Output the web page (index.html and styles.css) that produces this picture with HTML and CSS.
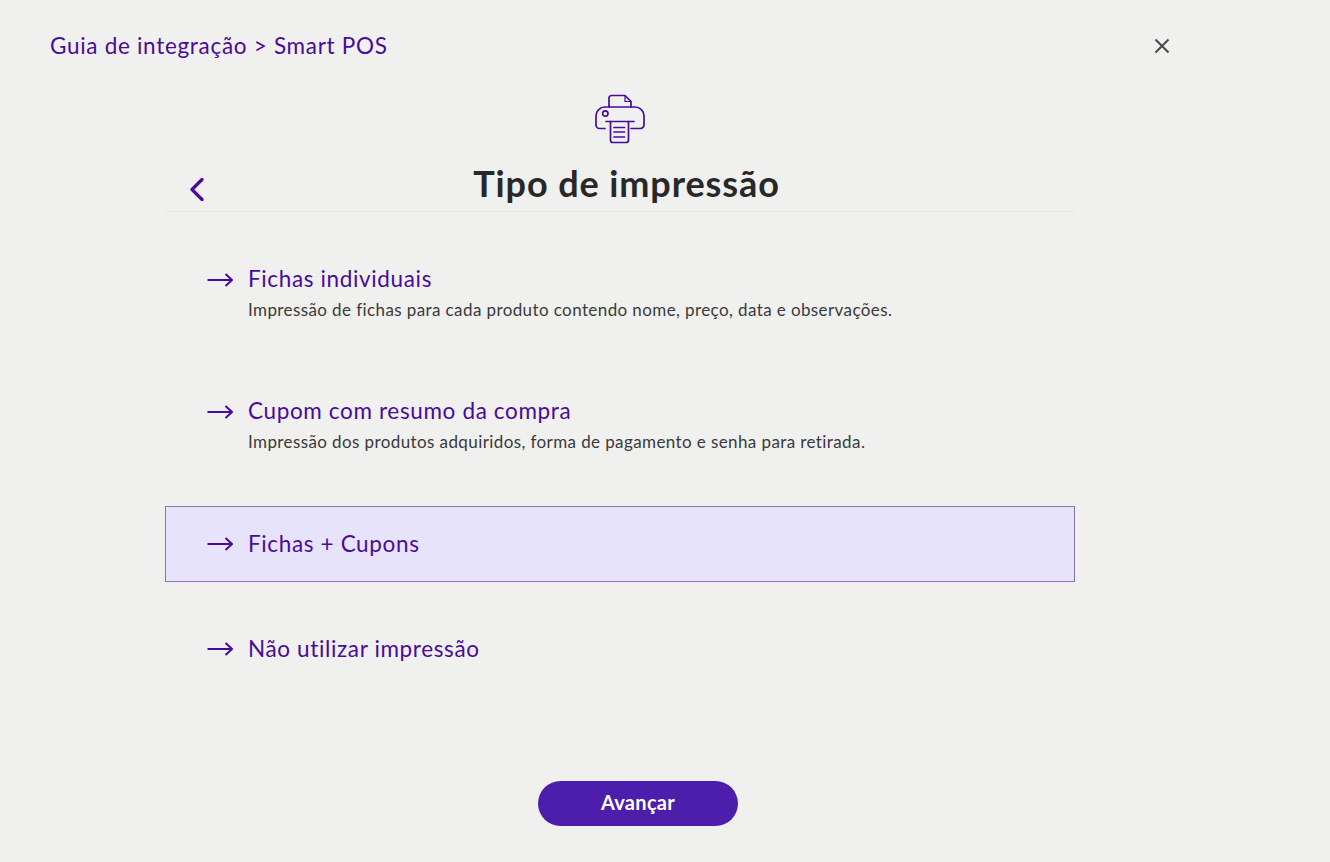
FILE: index.html
```html
<!DOCTYPE html>
<html lang="pt-BR">
<head>
<meta charset="utf-8">
<title>Tipo de impressão</title>
<link rel="stylesheet" href="styles.css">
</head>
<body>
<div class="page">
  <header class="top">
    <h2 class="crumb">Guia de integração &gt; Smart POS</h2>
    <button class="close" aria-label="Fechar">
      <svg width="16" height="16" viewBox="0 0 16 16"><path d="M1.500 1.500l13 13M14.500 1.500l-13 13" fill="none" stroke="#4a4a4a" stroke-width="2"/></svg>
    </button>
  </header>
  <main class="panel">
    <div class="hero">
      <svg class="printer" width="50" height="50" viewBox="0 0 50 50" fill="none" stroke="#4a0a9a" stroke-width="1.700" stroke-linecap="round" stroke-linejoin="round">
        <path d="M14 13V4a2.500 2.500 0 0 1 2.500-2.500H30l6 6V13"/>
        <path d="M30 1.500V7.500h6" stroke-width="1.200"/>
        <path d="M10 34.500H4.500A3.500 3.500 0 0 1 1 31V22A9 9 0 0 1 10 13h30a9 9 0 0 1 9 9v9a3.500 3.500 0 0 1-3.500 3.500H36"/>
        <circle cx="10.300" cy="19.500" r="2.700"/>
        <path d="M11 27.500h28"/>
        <path d="M15.500 27.500V46a2.500 2.500 0 0 0 2.500 2.500h13a2.500 2.500 0 0 0 2.500-2.500V27.500"/>
        <path d="M19 33.500h10.500M19 38h10.500M19 43h10.500"/>
      </svg>
    </div>
    <div class="title-row">
      <button class="back" aria-label="Voltar">
        <svg width="16" height="24" viewBox="0 0 16 24"><path d="M13 2.500L3 12.500l10 10" fill="none" stroke="#4a0a9a" stroke-width="3.200" stroke-linecap="round" stroke-linejoin="round"/></svg>
      </button>
      <h1 class="title">Tipo de impressão</h1>
    </div>
    <ul class="options">
      <li class="option tall">
        <svg class="arrow" width="26" height="14" viewBox="0 0 26 14"><path d="M0.500 7H24.500M18.500 1l6.500 6-6.500 6" fill="none" stroke="#4a0a9a" stroke-width="2"/></svg>
        <div class="text">
          <div class="name">Fichas individuais</div>
          <div class="desc">Impressão de fichas para cada produto contendo nome, preço, data e observações.</div>
        </div>
      </li>
      <li class="option tall">
        <svg class="arrow" width="26" height="14" viewBox="0 0 26 14"><path d="M0.500 7H24.500M18.500 1l6.500 6-6.500 6" fill="none" stroke="#4a0a9a" stroke-width="2"/></svg>
        <div class="text">
          <div class="name">Cupom com resumo da compra</div>
          <div class="desc">Impressão dos produtos adquiridos, forma de pagamento e senha para retirada.</div>
        </div>
      </li>
      <li class="option selected">
        <svg class="arrow" width="26" height="14" viewBox="0 0 26 14"><path d="M0.500 7H24.500M18.500 1l6.500 6-6.500 6" fill="none" stroke="#4a0a9a" stroke-width="2"/></svg>
        <div class="text"><div class="name">Fichas + Cupons</div></div>
      </li>
      <li class="option">
        <svg class="arrow" width="26" height="14" viewBox="0 0 26 14"><path d="M0.500 7H24.500M18.500 1l6.500 6-6.500 6" fill="none" stroke="#4a0a9a" stroke-width="2"/></svg>
        <div class="text"><div class="name">Não utilizar impressão</div></div>
      </li>
    </ul>
  </main>
  <div class="actions">
    <button class="next">Avançar</button>
  </div>
</div>
</body>
</html>
```
FILE: styles.css
```css
* { box-sizing: border-box; }
html, body { margin: 0; height: 100%; }
body {
  background: #f0f0ef;
  font-family: "Lato", "Noto Sans", sans-serif;
  color: #2b2b2b;
  overflow: hidden;
}
.page { width: 1330px; height: 862px; }
.top {
  display: flex;
  justify-content: space-between;
  align-items: center;
  width: 1120px;
  height: 30px;
  margin: 31px 0 0 50px;
}
.crumb {
  margin: 0;
  font-size: 22.500px;
  font-weight: 400;
  line-height: 30px;
  color: #4a0a9a;
  letter-spacing: 0.700px;
}
.close, .back {
  background: none;
  border: 0;
  padding: 0;
  display: flex;
}
.panel { width: 910px; margin: 0 0 0 165px; }
.hero {
  display: flex;
  justify-content: center;
  margin-top: 33px;
  height: 50px;
}
.printer { display: block; }
.title-row {
  display: flex;
  align-items: center;
  height: 68px;
  border-bottom: 1px solid #e4e4e4;
  padding-left: 24px;
}
.back { margin-top: 23px; }
.title {
  flex: 1;
  margin: 0;
  padding: 17px 27px 7px 0;
  font-size: 36px;
  line-height: 44px;
  font-weight: 700;
  letter-spacing: 0.900px;
  color: #282828;
  text-align: center;
}
.options { list-style: none; margin: 0; padding: 0; }
.option {
  display: flex;
  align-items: center;
  gap: 15px;
  padding-left: 41px;
  height: 76px;
  border: 1px solid transparent;
}
.option.tall { height: 132px; align-items: flex-start; padding-top: 51px; }
.option.tall .arrow { margin-top: 9px; }
.option.selected {
  width: 910px;
  background: #e7e3fa;
  border: 1px solid #8a74b4;
  border-bottom-color: #a26cc4;
  margin: 30px 0 29px;
}
.name {
  font-size: 22.500px;
  line-height: 30px;
  color: #4a0a9a;
  letter-spacing: 0.640px;
}
.desc {
  font-size: 17px;
  line-height: 24px;
  color: #3a3a3a;
  margin-top: 4px;
  letter-spacing: 0.400px;
}
.actions {
  display: flex;
  width: 1276px;
  justify-content: center;
}
.next {
  width: 200px;
  height: 45px;
  margin-top: 94px;
  padding: 0 0 3px;
  border: 0;
  border-radius: 23px;
  background: #4d1eab;
  color: #fff;
  font-family: inherit;
  font-size: 20px;
  font-weight: 700;
  letter-spacing: 0.300px;
}
```
